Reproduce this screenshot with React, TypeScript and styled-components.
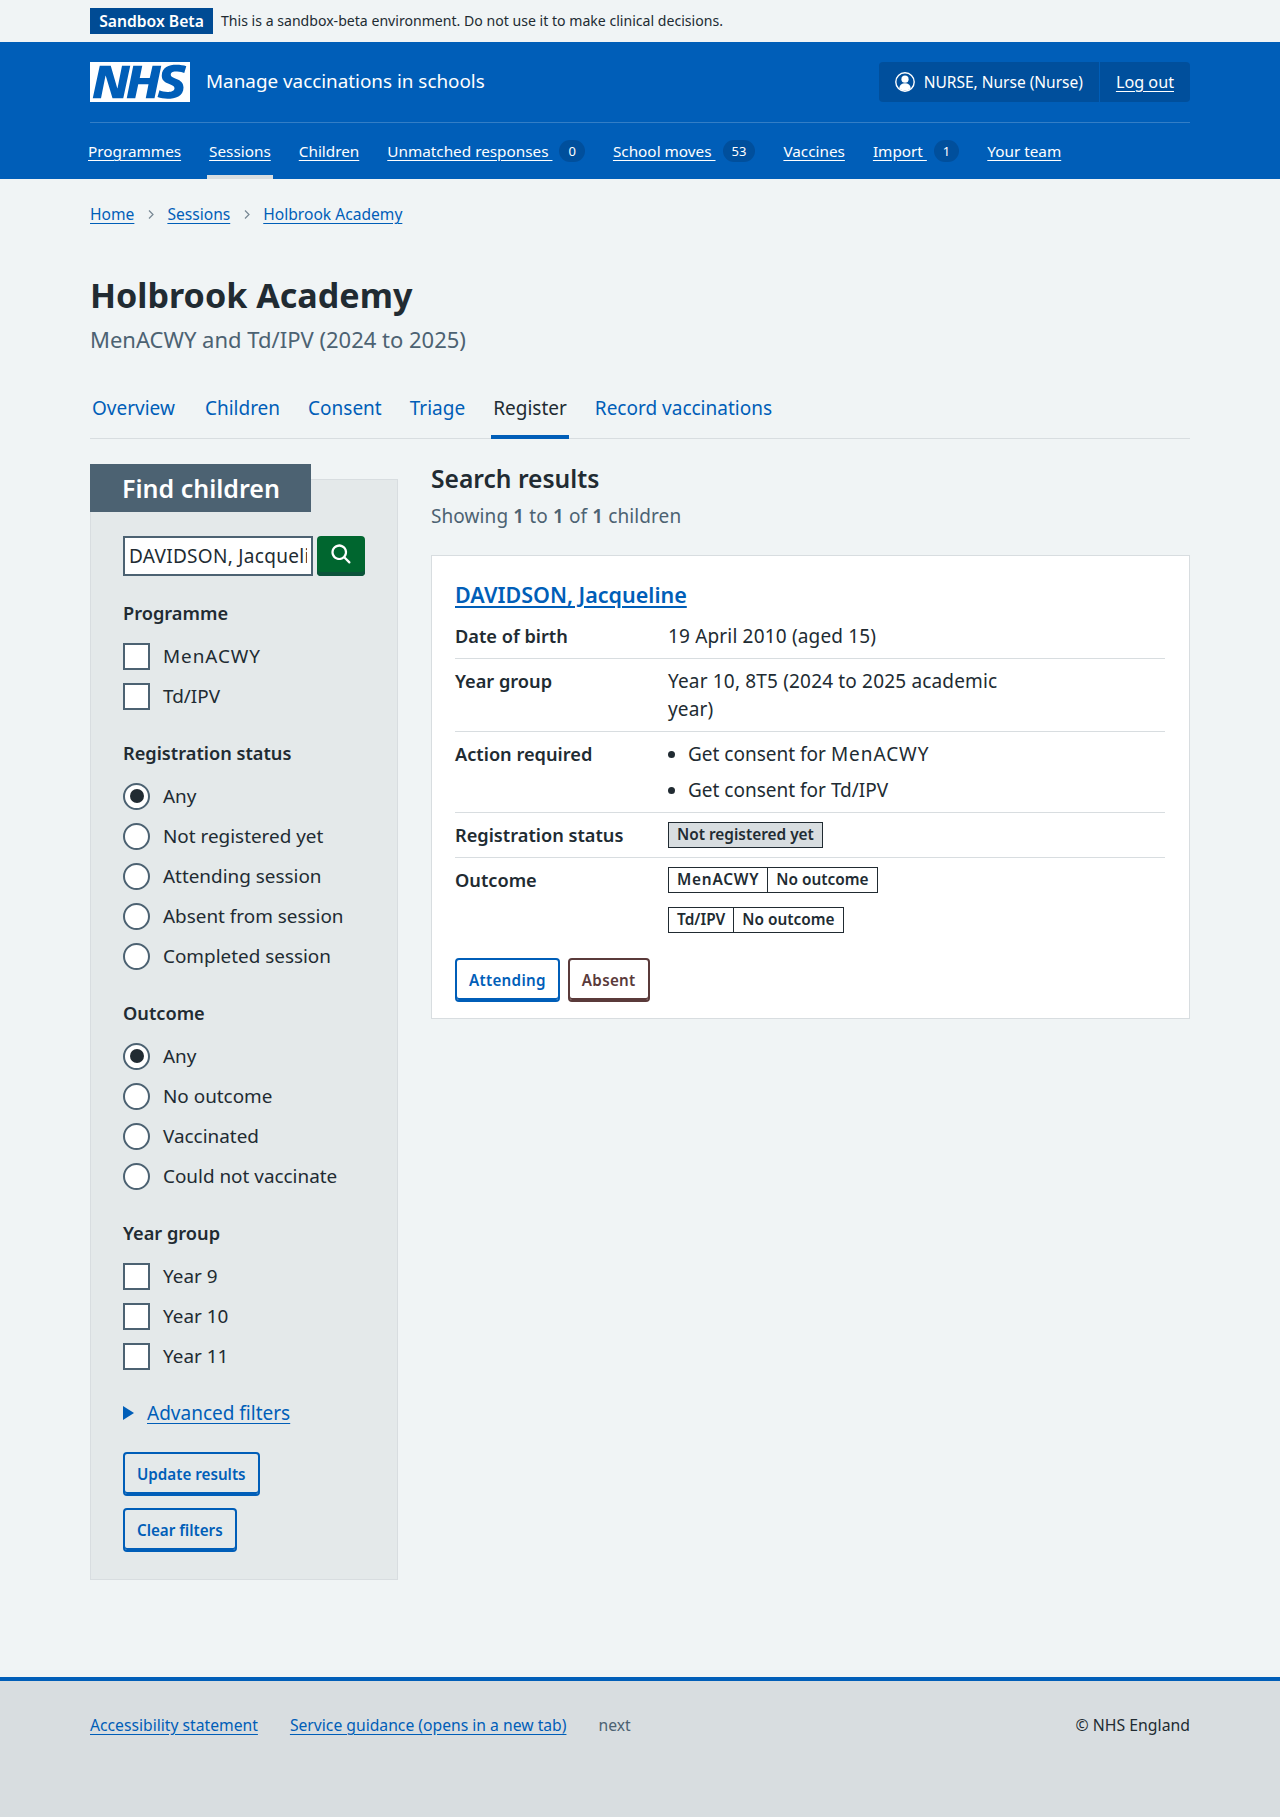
import React from "react";
import styled, { createGlobalStyle } from "styled-components";

const Global = createGlobalStyle`
  html, body { margin: 0; padding: 0; }
  body {
    background: #f0f4f5;
    color: #212b32;
    font-family: "Noto Sans", "Open Sans", Arial, sans-serif;
    font-size: 19px;
    line-height: 28px;
  }
  * { box-sizing: border-box; }
`;

const Container = styled.div`
  width: 1100px;
  margin: 0 auto;
`;

const EnvBar = styled.div`
  height: 42px;
  padding-top: 8px;
`;
const EnvInner = styled(Container)`
  display: flex;
  align-items: center;
  gap: 8px;
`;
const EnvTag = styled.strong`
  background: #004b94;
  color: #fff;
  font-size: 15.7px;
  font-weight: 600;
  line-height: 26px;
  height: 26px;
  width: 123px;
  text-align: center;
`;
const EnvText = styled.span`
  font-size: 14.1px;
  line-height: 26px;
`;

const Header = styled.header`
  background: #005eb8;
  height: 137px;
  color: #fff;
`;
const HeaderTop = styled(Container)`
  display: flex;
  align-items: center;
  justify-content: space-between;
  padding-top: 20px;
  padding-bottom: 20px;
  border-bottom: 1px solid rgba(255, 255, 255, 0.2);
  height: 81px;
`;
const Brand = styled.div`
  display: flex;
  align-items: center;
  gap: 16px;
`;
const ServiceName = styled.span`
  font-size: 18.85px;
  line-height: 28px;
  padding-bottom: 2px;
`;
const Account = styled.div`
  display: flex;
  height: 40px;
  background: #004f9c;
  border-radius: 4px;
  font-size: 15.5px;
`;
const AccountCell = styled.div`
  display: flex;
  align-items: center;
  gap: 9px;
  padding: 0 16px;
  & + & {
    border-left: 1px solid #005eb8;
  }
`;
const LogOut = styled.a`
  color: #fff;
  font-size: 16.2px;
  text-decoration: underline;
  text-underline-offset: 3px;
`;
const WhiteLink = styled.a`
  color: #fff;
  text-decoration: underline;
  text-underline-offset: 3px;
  white-space: pre;
`;
const Nav = styled(Container)`
  height: 56px;
  font-size: 15.3px;
`;
const NavRow = styled.nav`
  display: flex;
  margin-left: -4px;
`;
const NavItem = styled.div<{ $active?: boolean }>`
  display: flex;
  align-items: center;
  height: 56px;
  padding: 4px 2px 0;
  margin-right: 24px;
  border-bottom: 4px solid ${(p) => (p.$active ? "#d8dde0" : "transparent")};
`;
const Badge = styled.span`
  display: inline-block;
  min-width: 24px;
  height: 22px;
  margin-left: 7px;
  padding: 0 9px;
  border-radius: 12px;
  background: #004f9c;
  color: #fff;
  font-size: 13px;
  line-height: 22px;
  text-align: center;
`;

const Main = styled(Container)`
  min-height: 1498px;
`;
const Crumbs = styled.ol`
  display: flex;
  align-items: center;
  list-style: none;
  margin: 0;
  padding: 21px 0 0;
  font-size: 15.6px;
  line-height: 28px;
`;
const Crumb = styled.li`
  display: flex;
  align-items: center;
`;
const Chevron = styled.svg`
  width: 8px;
  height: 11px;
  margin: 0 12.5px;
  fill: none;
  stroke: #768692;
  stroke-width: 1.2;
`;
const BlueLink = styled.a`
  color: #005eb8;
  text-decoration: underline;
  text-underline-offset: 3px;
`;
const Title = styled.h1`
  margin: 45px 0 0;
  font-size: 34.1px;
  line-height: 44px;
  font-weight: 700;
`;
const Caption = styled.p`
  margin: 8px 0 0;
  color: #4c6272;
  font-size: 22px;
  line-height: 28px;
`;
const Tabs = styled.div`
  display: flex;
  margin-top: 32px;
  height: 54px;
  border-bottom: 1px solid #d8dde0;
  font-size: 19px;
`;
const Tab = styled.a<{ $active?: boolean }>`
  display: flex;
  align-items: center;
  height: 54px;
  padding: 0 2px 4px;
  margin-right: 24px;
  color: ${(p) => (p.$active ? "#212b32" : "#005eb8")};
  border-bottom: 4px solid ${(p) => (p.$active ? "#005eb8" : "transparent")};
  &:first-child {
    margin-right: 26px;
  }
`;

const Columns = styled.div`
  display: grid;
  grid-template-columns: 308px 759px;
  column-gap: 33px;
  align-items: start;
  margin-top: 25px;
`;
const Panel = styled.aside`
  margin-top: 15px;
  background: #e4e9ea;
  border: 1px solid #d8dde0;
  padding: 0 32px 27px;
  height: 1101px;
`;
const PanelHead = styled.h2`
  margin: -16px 0 0 -33px;
  width: 221px;
  height: 48px;
  padding-left: 32px;
  background: #4c6272;
  color: #fff;
  font-size: 25px;
  font-weight: 600;
  line-height: 48px;
`;
const SearchRow = styled.div`
  display: flex;
  gap: 4px;
  margin-top: 24px;
`;
const SearchInput = styled.input`
  width: 190px;
  height: 40px;
  border: 2px solid #4c6272;
  background: #fff;
  padding: 0 4px;
  color: #212b32;
  font-family: inherit;
  font-size: 19px;
  letter-spacing: 0.3px;
  border-radius: 0;
  outline: 0;
`;
const SearchButton = styled.button`
  width: 48px;
  height: 40px;
  padding: 0 0 4px;
  border: 0;
  border-radius: 4px;
  background: #00662f;
  box-shadow: inset 0 -4px 0 #0b533b;
  display: flex;
  align-items: center;
  justify-content: center;
`;
const Group = styled.div`
  margin-top: 23px;
`;
const GroupLabel = styled.div`
  font-size: 18.2px;
  font-weight: 600;
  line-height: 28px;
  margin-bottom: 9px;
`;
const Option = styled.div`
  display: flex;
  align-items: center;
  gap: 13px;
  height: 40px;
  font-size: 18.9px;
`;
const Box = styled.span`
  width: 27px;
  height: 27px;
  background: #fff;
  border: 2px solid #4c6272;
`;
const Radio = styled.span<{ $on?: boolean }>`
  width: 27px;
  height: 27px;
  background: #fff;
  border: 2px solid #4c6272;
  border-radius: 50%;
  display: flex;
  align-items: center;
  justify-content: center;
  &::after {
    content: "";
    display: ${(p) => (p.$on ? "block" : "none")};
    width: 14px;
    height: 14px;
    border-radius: 50%;
    background: #212b32;
  }
`;
const Wide = styled.span`
  letter-spacing: 0.05em;
`;
const Details = styled.div`
  display: flex;
  align-items: center;
  gap: 13px;
  margin-top: 23px;
  font-size: 19px;
  height: 28px;
`;
const Triangle = styled.span`
  width: 0;
  height: 0;
  border-left: 11px solid #005eb8;
  border-top: 7px solid transparent;
  border-bottom: 7px solid transparent;
`;
const Button = styled.button<{ $tone?: string }>`
  display: block;
  height: 44px;
  padding: 0 12px;
  background: transparent;
  border: 2px solid ${(p) => p.$tone || "#005eb8"};
  border-radius: 4px;
  box-shadow: inset 0 -2px 0 ${(p) => p.$tone || "#005eb8"};
  color: ${(p) => p.$tone || "#005eb8"};
  font-family: inherit;
  font-size: 15.2px;
  font-weight: 600;
  line-height: 24px;
`;
const CardButton = styled(Button)`
  letter-spacing: 0.3px;
`;
const PanelButtons = styled.div`
  display: flex;
  flex-direction: column;
  align-items: flex-start;
  gap: 12px;
  margin-top: 25px;
`;

const ResultsHead = styled.h2`
  margin: 0;
  font-size: 24.6px;
  font-weight: 600;
  line-height: 30px;
`;
const Showing = styled.p`
  margin: 8px 0 0;
  color: #4c6272;
  font-size: 19px;
  line-height: 28px;
  letter-spacing: 0.1px;
  strong { font-weight: 600; }
`;
const Card = styled.section`
  margin-top: 25px;
  height: 464px;
  background: #fff;
  border: 1px solid #d8dde0;
  padding: 24px 24px 16px 23px;
`;
const CardTitle = styled.a`
  display: block;
  color: #005eb8;
  font-size: 21.5px;
  font-weight: 600;
  line-height: 30px;
  margin-bottom: 4px;
  text-decoration: underline;
  text-underline-offset: 3px;
`;
const Row = styled.div<{ $plain?: boolean }>`
  display: grid;
  grid-template-columns: 213px 355px;
  padding: 8px 0;
  border-bottom: ${(p) => (p.$plain ? "0" : "1px solid #d8dde0")};
  font-size: 19px;
  line-height: 28px;
`;
const Key = styled.div`
  font-weight: 600;
  font-size: 18.2px;
`;
const Value = styled.div`
  letter-spacing: 0.17px;
`;
const Bullets = styled.ul`
  margin: 0;
  padding: 0 0 0 20px;
  li + li { margin-top: 8px; }
`;
const StatusTag = styled.span`
  display: inline-block;
  height: 26px;
  padding: 0 8px;
  border: 1px solid #212b32;
  background: #d8dde0;
  font-size: 15.4px;
  font-weight: 600;
  line-height: 24px;
  vertical-align: top;
  margin-top: 1px;
`;
const TagStack = styled.div`
  display: flex;
  flex-direction: column;
  align-items: flex-start;
  gap: 14px;
  padding-top: 1px;
`;
const TagGroup = styled.div`
  display: flex;
  height: 26px;
  border: 1px solid #212b32;
  font-size: 15.4px;
  font-weight: 600;
  line-height: 24px;
`;
const TagPart = styled.span`
  padding: 0 8px;
  & + & { border-left: 1px solid #212b32; }
`;
const CardActions = styled.div`
  display: flex;
  gap: 8px;
  margin-top: 17px;
`;

const Footer = styled.footer`
  height: 140px;
  background: #d8dde0;
  border-top: 4px solid #005eb8;
  font-size: 15.7px;
`;
const FooterInner = styled(Container)`
  display: flex;
  align-items: center;
  justify-content: space-between;
  padding-top: 30px;
`;
const FooterLinks = styled.div`
  display: flex;
  gap: 32px;
  span { color: #4c6272; }
`;
const Copyright = styled.span`
  font-size: 15.8px;
`;

function NhsLogo() {
  return (
    <svg width="100" height="40" viewBox="0 0 40 16" aria-label="NHS">
      <path fill="#fff" d="M0 0h40v16H0z" />
      <path
        fill="#005eb8"
        d="M3.9 1.5h4.4l2.6 9h.1l1.8-9h3.3l-2.8 13H9l-2.7-9h-.1l-1.8 9H1.1M17.3 1.5h3.6l-1 4.9h4L25 1.5h3.5l-2.7 13h-3.5l1.1-5.6h-4.1l-1.2 5.6h-3.4M37.7 4.4c-.7-.3-1.6-.6-2.9-.6-1.4 0-2.5.2-2.5 1.3 0 1.8 5.1 1.2 5.1 5.1 0 3.6-3.3 4.5-6.4 4.5-1.3 0-2.9-.3-4-.7l.8-2.7c.7.4 2.1.7 3.2.7s2.8-.2 2.8-1.5c0-2.1-5.1-1.3-5.1-5 0-3.4 2.9-4.4 5.8-4.4 1.6 0 3.1.2 4 .6"
      />
    </svg>
  );
}

function UserIcon() {
  return (
    <svg width="20" height="20" viewBox="0 0 20 20">
      <circle cx="10" cy="10" r="9.2" fill="none" stroke="#fff" strokeWidth="1.4" />
      <circle cx="10" cy="7.2" r="3.6" fill="#fff" />
      <path fill="#fff" d="M4.2 16.2c.4-3.4 2.6-5 5.8-5s5.4 1.6 5.8 5c-1.5 1.5-3.5 2.4-5.8 2.4s-4.3-.9-5.8-2.4z" />
    </svg>
  );
}

function SearchIcon() {
  return (
    <svg width="27" height="27" viewBox="0 0 24 24" fill="#fff">
      <path d="M19.71 18.29l-4.11-4.1a7 7 0 1 0-1.41 1.41l4.1 4.11a1 1 0 0 0 1.42 0 1 1 0 0 0 0-1.42zM5 10a5 5 0 1 1 5 5 5 5 0 0 1-5-5z" />
    </svg>
  );
}

const navItems: { label: string; badge?: string; active?: boolean }[] = [
  { label: "Programmes" },
  { label: "Sessions", active: true },
  { label: "Children" },
  { label: "Unmatched responses ", badge: "0" },
  { label: "School moves ", badge: "53" },
  { label: "Vaccines" },
  { label: "Import ", badge: "1" },
  { label: "Your team" },
];

const crumbs = ["Home", "Sessions", "Holbrook Academy"];
const tabs = ["Overview", "Children", "Consent", "Triage", "Register", "Record vaccinations"];

function Checks({ items }: { items: string[] }) {
  return (
    <>
      {items.map((t) => (
        <Option key={t}>
          <Box />
          {t === "MenACWY" ? <Wide>{t}</Wide> : t}
        </Option>
      ))}
    </>
  );
}

function Radios({ items }: { items: string[] }) {
  return (
    <>
      {items.map((t, i) => (
        <Option key={t}>
          <Radio $on={i === 0} />
          {t}
        </Option>
      ))}
    </>
  );
}

export default function App() {
  return (
    <>
      <Global />
      <EnvBar>
        <EnvInner>
          <EnvTag>Sandbox Beta</EnvTag>
          <EnvText>This is a sandbox-beta environment. Do not use it to make clinical decisions.</EnvText>
        </EnvInner>
      </EnvBar>
      <Header>
        <HeaderTop>
          <Brand>
            <NhsLogo />
            <ServiceName>Manage vaccinations in schools</ServiceName>
          </Brand>
          <Account>
            <AccountCell>
              <UserIcon />
              NURSE, Nurse (Nurse)
            </AccountCell>
            <AccountCell>
              <LogOut>Log out</LogOut>
            </AccountCell>
          </Account>
        </HeaderTop>
        <Nav>
          <NavRow>
            {navItems.map((n) => (
              <NavItem key={n.label} $active={n.active}>
                <WhiteLink>{n.label}</WhiteLink>
                {n.badge && <Badge>{n.badge}</Badge>}
              </NavItem>
            ))}
          </NavRow>
        </Nav>
      </Header>
      <Main>
        <Crumbs>
          {crumbs.map((c, i) => (
            <Crumb key={c}>
              <BlueLink>{c}</BlueLink>
              {i < crumbs.length - 1 && (
                <Chevron viewBox="0 0 8 11">
                  <path d="M2 1.5l4 4-4 4" />
                </Chevron>
              )}
            </Crumb>
          ))}
        </Crumbs>
        <Title>Holbrook Academy</Title>
        <Caption>MenACWY and Td/IPV (2024 to 2025)</Caption>
        <Tabs>
          {tabs.map((t) => (
            <Tab key={t} $active={t === "Register"}>
              {t}
            </Tab>
          ))}
        </Tabs>
        <Columns>
          <Panel>
            <PanelHead>Find children</PanelHead>
            <SearchRow>
              <SearchInput readOnly defaultValue="DAVIDSON, Jacqueline" />
              <SearchButton aria-label="Search">
                <SearchIcon />
              </SearchButton>
            </SearchRow>
            <Group>
              <GroupLabel>Programme</GroupLabel>
              <Checks items={["MenACWY", "Td/IPV"]} />
            </Group>
            <Group>
              <GroupLabel>Registration status</GroupLabel>
              <Radios items={["Any", "Not registered yet", "Attending session", "Absent from session", "Completed session"]} />
            </Group>
            <Group>
              <GroupLabel>Outcome</GroupLabel>
              <Radios items={["Any", "No outcome", "Vaccinated", "Could not vaccinate"]} />
            </Group>
            <Group>
              <GroupLabel>Year group</GroupLabel>
              <Checks items={["Year 9", "Year 10", "Year 11"]} />
            </Group>
            <Details>
              <Triangle />
              <BlueLink>Advanced filters</BlueLink>
            </Details>
            <PanelButtons>
              <Button>Update results</Button>
              <Button>Clear filters</Button>
            </PanelButtons>
          </Panel>
          <div>
            <ResultsHead>Search results</ResultsHead>
            <Showing>
              Showing <strong>1</strong> to <strong>1</strong> of <strong>1</strong> children
            </Showing>
            <Card>
              <CardTitle>DAVIDSON, Jacqueline</CardTitle>
              <Row>
                <Key>Date of birth</Key>
                <Value>19 April 2010 (aged 15)</Value>
              </Row>
              <Row>
                <Key>Year group</Key>
                <Value>Year 10, 8T5 (2024 to 2025 academic year)</Value>
              </Row>
              <Row>
                <Key>Action required</Key>
                <Bullets>
                  <li>
                    Get consent for <Wide>MenACWY</Wide>
                  </li>
                  <li>Get consent for Td/IPV</li>
                </Bullets>
              </Row>
              <Row>
                <Key>Registration status</Key>
                <div>
                  <StatusTag>Not registered yet</StatusTag>
                </div>
              </Row>
              <Row $plain>
                <Key>Outcome</Key>
                <TagStack>
                  <TagGroup>
                    <TagPart>
                      <Wide>MenACWY</Wide>
                    </TagPart>
                    <TagPart>No outcome</TagPart>
                  </TagGroup>
                  <TagGroup>
                    <TagPart>Td/IPV</TagPart>
                    <TagPart>No outcome</TagPart>
                  </TagGroup>
                </TagStack>
              </Row>
              <CardActions>
                <CardButton>Attending</CardButton>
                <CardButton $tone="#5a3a3a">Absent</CardButton>
              </CardActions>
            </Card>
          </div>
        </Columns>
      </Main>
      <Footer>
        <FooterInner>
          <FooterLinks>
            <BlueLink>Accessibility statement</BlueLink>
            <BlueLink>Service guidance (opens in a new tab)</BlueLink>
            <span>next</span>
          </FooterLinks>
          <Copyright>© NHS England</Copyright>
        </FooterInner>
      </Footer>
    </>
  );
}
